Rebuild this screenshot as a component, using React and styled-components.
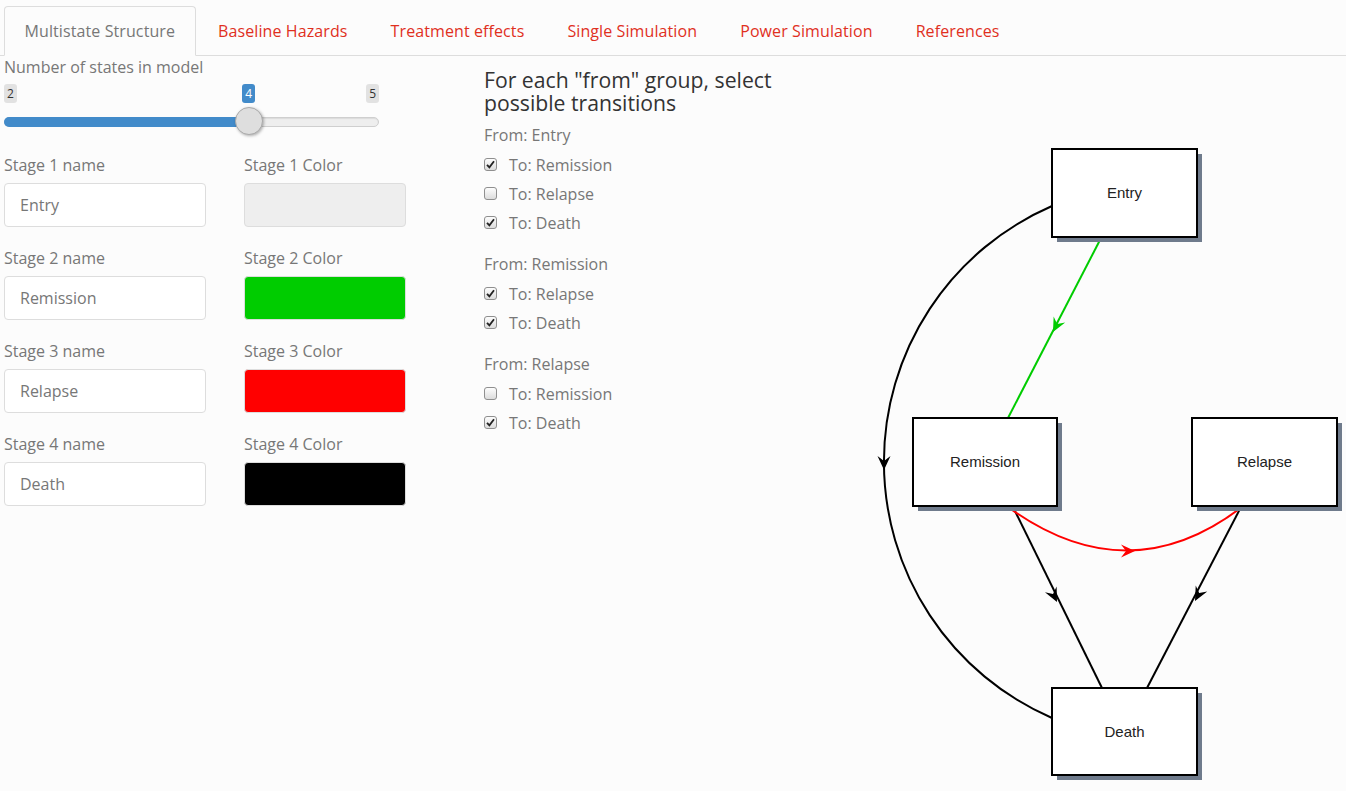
import React from "react";
import styled, { createGlobalStyle } from "styled-components";

const Global = createGlobalStyle`
  html, body { margin: 0; padding: 0; background: #fcfcfc; }
  body { font-family: "Open Sans", "Noto Sans", sans-serif; color: #777; }
  * { box-sizing: border-box; }
`;

const Page = styled.div`
  width: 1346px;
  height: 791px;
  overflow: hidden;
  padding: 6px 0 0 0;
`;

const TabBar = styled.ul`
  display: flex;
  list-style: none;
  margin: 0;
  padding: 0 0 0 4px;
  border-bottom: 1px solid #ddd;
  height: 50px;
`;

const Tab = styled.li`
  height: 50px;
  margin-right: 2px;
  padding: 0 19.5px;
  display: flex;
  align-items: center;
  font-size: 16px;
  letter-spacing: 0.1px;
  color: ${(p) => (p.$active ? "#777" : "#e0301e")};
  border: 1px solid ${(p) => (p.$active ? "#ddd" : "transparent")};
  border-bottom-color: ${(p) => (p.$active ? "#fcfcfc" : "transparent")};
  border-radius: 4px 4px 0 0;
  background: ${(p) => (p.$active ? "#fcfcfc" : "transparent")};
  white-space: nowrap;
`;

const Main = styled.div`
  display: flex;
  padding-left: 4px;
`;

const LeftCol = styled.div`
  width: 402px;
  padding-top: 1px;
`;

const FieldLabel = styled.div`
  font-size: 16px;
  line-height: 20px;
  color: #777;
`;

const SliderBox = styled.div`
  position: relative;
  width: 375px;
  height: 60px;
`;

const Tick = styled.span`
  position: absolute;
  top: 7px;
  height: 19px;
  padding: 0 3px;
  font-size: 12px;
  line-height: 19px;
  border-radius: 3px;
  color: ${(p) => (p.$value ? "#fff" : "#333")};
  background: ${(p) => (p.$value ? "#428bca" : "rgba(0,0,0,0.1)")};
`;

const Track = styled.div`
  position: absolute;
  top: 40px;
  left: 0;
  right: 0;
  height: 10px;
  border-radius: 5px;
  background: #eee;
  border: 1px solid #cfcfcf;
  box-shadow: inset 0 1px 1px rgba(0,0,0,0.08);
`;

const Fill = styled.div`
  position: absolute;
  top: 40px;
  left: 0;
  height: 10px;
  border-radius: 5px 0 0 5px;
  background: #428bca;
`;

const Handle = styled.div`
  position: absolute;
  top: 30px;
  width: 28px;
  height: 28px;
  margin-left: -14px;
  border-radius: 50%;
  background: #dedede;
  border: 1px solid #aaa;
  box-shadow: 1px 1px 3px rgba(0,0,0,0.3);
`;

const StageGrid = styled.div`
  display: grid;
  grid-template-columns: 202px 162px;
  column-gap: 38px;
  row-gap: 21px;
  margin-top: 18px;
`;

const Field = styled.div`
  display: flex;
  flex-direction: column;
  gap: 8px;
`;

const TextBox = styled.div`
  height: 44px;
  border: 1px solid #ddd;
  border-radius: 4px;
  background: #fff;
  padding: 0 15px;
  display: flex;
  align-items: center;
  font-size: 16px;
  color: #777;
`;

const Swatch = styled.div`
  height: 44px;
  border: 1px solid #ddd;
  border-radius: 4px;
  background: ${(p) => p.$color};
`;

const MidCol = styled.div`
  margin-left: 78px;
  width: 320px;
  padding-top: 12px;
`;

const Heading = styled.h4`
  margin: 0 0 7px;
  font-size: 21.2px;
  line-height: 23px;
  font-weight: 400;
  color: #333;
`;

const Group = styled.div`
  margin-bottom: 13px;
`;

const GroupTitle = styled.div`
  font-size: 16px;
  line-height: 29px;
  color: #777;
`;

const CheckRow = styled.div`
  display: flex;
  align-items: center;
  height: 29px;
  font-size: 16px;
  color: #777;
`;

const Box = styled.span`
  width: 13px;
  height: 13px;
  border: 1px solid #8f8f8f;
  border-radius: 3px;
  background: linear-gradient(#fdfdfd, #dcdcdc);
  margin-right: 12px;
  display: flex;
  align-items: center;
  justify-content: center;
`;

const DiagramWrap = styled.div`
  margin-left: auto;
`;

const Check = ({ on, children }) => (
  <CheckRow>
    <Box>
      {on && (
        <svg width="9" height="9" viewBox="0 0 9 9">
          <path d="M1 4.8 L3.4 7.4 L8 1.2" fill="none" stroke="#222" strokeWidth="1.8" />
        </svg>
      )}
    </Box>
    {children}
  </CheckRow>
);

const Arrow = ({ x, y, angle, color }) => (
  <polygon
    points="0,0 -14,-6.5 -9,0 -14,6.5"
    fill={color}
    transform={`translate(${x},${y}) rotate(${angle})`}
  />
);

const Node = ({ x, y, w, h, label }) => (
  <g>
    <rect x={x + 5} y={y + 5} width={w} height={h} fill="#6f7b8c" />
    <rect x={x} y={y} width={w} height={h} fill="#fff" stroke="#000" strokeWidth="2" />
    <text
      x={x + w / 2}
      y={y + h / 2 + 5}
      textAnchor="middle"
      fontFamily="'Liberation Sans', Arial, sans-serif"
      fontSize="15"
      fill="#222"
    >
      {label}
    </text>
  </g>
);

const Diagram = () => (
  <svg width="500" height="735" viewBox="846 56 500 735">
    <path d="M1052,206 A279,279 0 0,0 1052,718" fill="none" stroke="#000" strokeWidth="2" />
    <path d="M1100,240 L1008,418" stroke="#00cc00" strokeWidth="2" />
    <path d="M1013,507 L1102,688" stroke="#000" strokeWidth="2" />
    <path d="M1241,507 L1147,688" stroke="#000" strokeWidth="2" />
    <path d="M1008,507 Q1128,594 1242,507" fill="none" stroke="#ff0000" strokeWidth="2" />
    <Arrow x={1053} y={332} angle={117.3} color="#00cc00" />
    <Arrow x={884} y={470} angle={90} color="#000" />
    <Arrow x={1057} y={602} angle={63.7} color="#000" />
    <Arrow x={1195} y={601} angle={117.6} color="#000" />
    <Arrow x={1135} y={551} angle={0} color="#ff0000" />
    <Node x={1052} y={149} w={145} h={88} label="Entry" />
    <Node x={913} y={418} w={144} h={88} label="Remission" />
    <Node x={1192} y={418} w={145} h={88} label="Relapse" />
    <Node x={1052} y={688} w={145} h={87} label="Death" />
  </svg>
);

const tabs = [
  "Multistate Structure",
  "Baseline Hazards",
  "Treatment effects",
  "Single Simulation",
  "Power Simulation",
  "References",
];

const stages = [
  { name: "Entry", color: "#eeeeee" },
  { name: "Remission", color: "#00cc00" },
  { name: "Relapse", color: "#ff0000" },
  { name: "Death", color: "#000000" },
];

const groups = [
  { from: "Entry", items: [["Remission", true], ["Relapse", false], ["Death", true]] },
  { from: "Remission", items: [["Relapse", true], ["Death", true]] },
  { from: "Relapse", items: [["Remission", false], ["Death", true]] },
];

export default function App() {
  const min = 2, max = 5, val = 4;
  const frac = (val - min) / (max - min);
  const handleX = 14 + frac * (375 - 28);
  return (
    <Page>
      <Global />
      <TabBar>
        {tabs.map((t, i) => (
          <Tab key={t} $active={i === 0}>{t}</Tab>
        ))}
      </TabBar>
      <Main>
        <LeftCol>
          <FieldLabel>Number of states in model</FieldLabel>
          <SliderBox>
            <Track />
            <Fill style={{ width: handleX }} />
            <Tick style={{ left: 0 }}>2</Tick>
            <Tick style={{ right: 0 }}>5</Tick>
            <Tick $value style={{ left: handleX - 7 }}>4</Tick>
            <Handle style={{ left: handleX }} />
          </SliderBox>
          <StageGrid>
            {stages.map((s, i) => (
              <React.Fragment key={s.name}>
                <Field>
                  <FieldLabel>Stage {i + 1} name</FieldLabel>
                  <TextBox>{s.name}</TextBox>
                </Field>
                <Field>
                  <FieldLabel>Stage {i + 1} Color</FieldLabel>
                  <Swatch $color={s.color} />
                </Field>
              </React.Fragment>
            ))}
          </StageGrid>
        </LeftCol>
        <MidCol>
          <Heading>For each "from" group, select possible transitions</Heading>
          {groups.map((g) => (
            <Group key={g.from}>
              <GroupTitle>From: {g.from}</GroupTitle>
              {g.items.map(([to, on]) => (
                <Check key={to} on={on}>To: {to}</Check>
              ))}
            </Group>
          ))}
        </MidCol>
        <DiagramWrap>
          <Diagram />
        </DiagramWrap>
      </Main>
    </Page>
  );
}
